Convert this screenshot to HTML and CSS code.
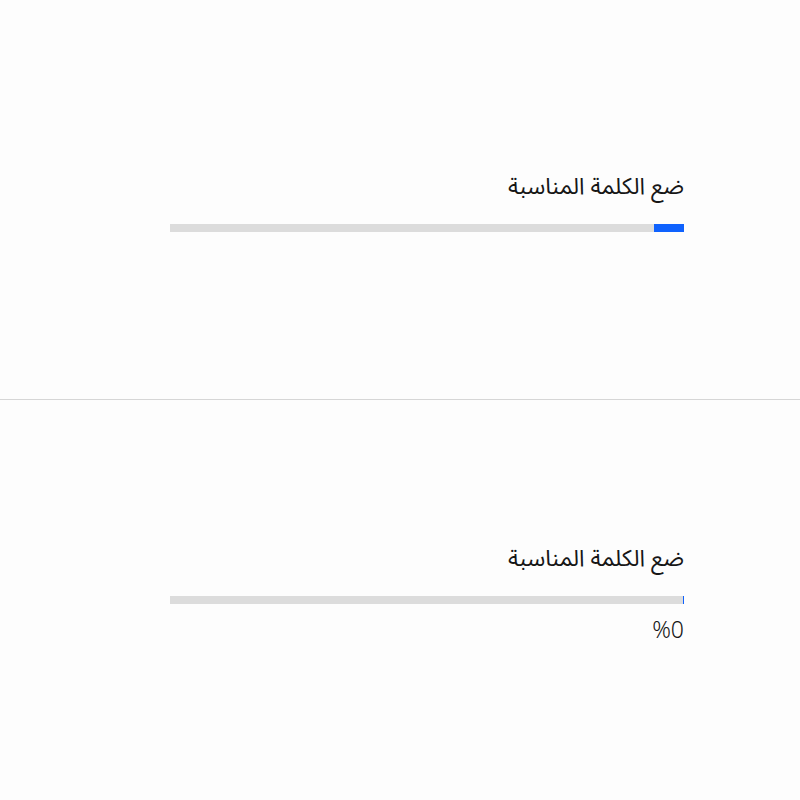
FILE: index.html
```html
<!DOCTYPE html>
<html lang="ar" dir="rtl">
<head>
<meta charset="utf-8">
<link rel="stylesheet" href="styles.css">
</head>
<body>
<section class="pane pane-top">
  <div class="progress">
    <div class="label">ضع الكلمة المناسبة</div>
    <div class="track"><div class="fill fill-indeterminate"></div></div>
  </div>
</section>
<section class="pane pane-bottom">
  <div class="progress">
    <div class="label">ضع الكلمة المناسبة</div>
    <div class="track"><div class="fill fill-zero"></div></div>
    <div class="helper">%0</div>
  </div>
</section>
</body>
</html>
```
FILE: styles.css
```css
html, body {
  margin: 0;
  padding: 0;
  background: #fdfdfd;
}
body {
  font-family: "Noto Sans Arabic", "Noto Sans", "DejaVu Sans", sans-serif;
  color: #161616;
}
.pane {
  box-sizing: border-box;
  height: 400px;
  padding-right: 116px;
  padding-left: 170px;
}
.pane-top {
  padding-top: 171px;
  border-bottom: 1px solid #d6d6d6;
}
.pane-bottom {
  padding-top: 143px;
}
.progress {
  width: 514px;
}
.label {
  font-size: 23px;
  line-height: 32px;
  margin-bottom: 21px;
}
.track {
  height: 8px;
  background: #dcdcdc;
  position: relative;
}
.fill {
  position: absolute;
  top: 0;
  right: 0;
  height: 8px;
  background: #0f62fe;
}
.fill-indeterminate {
  width: 30px;
}
.fill-zero {
  width: 1px;
}
.helper {
  font-size: 23px;
  line-height: 32px;
  margin-top: 11px;
  font-weight: 300;
}
```
